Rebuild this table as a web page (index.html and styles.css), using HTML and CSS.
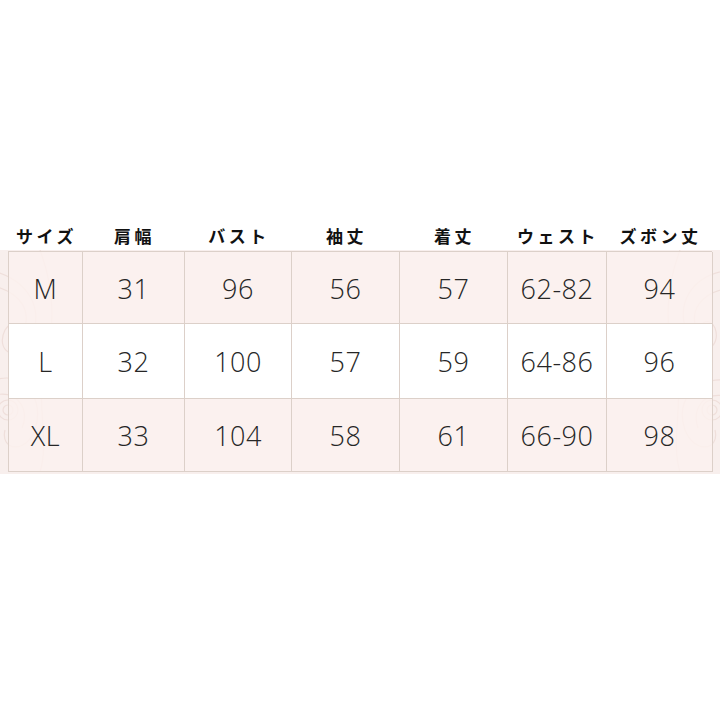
FILE: index.html
```html
<!DOCTYPE html>
<html lang="ja">
<head>
<meta charset="utf-8">
<title>サイズ表</title>
<link rel="stylesheet" href="styles.css">
</head>
<body>
<div class="sheet">
  <div class="head">
    <div class="hcell">サイズ</div>
    <div class="hcell">肩幅</div>
    <div class="hcell">バスト</div>
    <div class="hcell">袖丈</div>
    <div class="hcell">着丈</div>
    <div class="hcell">ウェスト</div>
    <div class="hcell">ズボン丈</div>
  </div>
  <div class="band">
    <svg class="paisley paisley-left" width="60" height="222" viewBox="0 0 60 222" aria-hidden="true">
      <g fill="none" stroke="#efdfdb" stroke-width="1.2">
        <path d="M-10 20 C30 30 45 60 30 90 C15 115 -5 100 5 80 C12 68 25 75 20 88"/>
        <path d="M-10 35 C22 42 33 62 22 84"/>
        <path d="M-5 130 C25 120 45 150 35 180 C25 205 0 200 5 180"/>
        <path d="M-5 145 C18 140 30 160 22 178"/>
        <circle cx="8" cy="160" r="10"/>
        <circle cx="8" cy="160" r="5"/>
        <path d="M40 0 C55 40 55 80 45 110 C35 150 50 190 40 222"/>
      </g>
    </svg>
    <svg class="paisley paisley-right" width="60" height="222" viewBox="0 0 60 222" aria-hidden="true">
      <g fill="none" stroke="#efdfdb" stroke-width="1.2">
        <path d="M70 20 C30 25 15 55 28 85 C40 110 62 98 55 78 C50 66 36 72 40 86"/>
        <path d="M70 38 C40 42 28 62 38 82"/>
        <path d="M65 130 C35 128 15 150 25 180 C35 205 60 200 55 180"/>
        <path d="M65 146 C42 142 32 160 38 178"/>
        <circle cx="52" cy="160" r="10"/>
        <circle cx="52" cy="160" r="5"/>
        <path d="M20 0 C5 40 5 80 15 110 C25 150 10 190 20 222"/>
      </g>
    </svg>
    <div class="grid">
      <div class="cell pink">M</div>
      <div class="cell pink">31</div>
      <div class="cell pink">96</div>
      <div class="cell pink">56</div>
      <div class="cell pink">57</div>
      <div class="cell pink">62-82</div>
      <div class="cell pink">94</div>

      <div class="cell white">L</div>
      <div class="cell white">32</div>
      <div class="cell white">100</div>
      <div class="cell white">57</div>
      <div class="cell white">59</div>
      <div class="cell white">64-86</div>
      <div class="cell white">96</div>

      <div class="cell pink">XL</div>
      <div class="cell pink">33</div>
      <div class="cell pink">104</div>
      <div class="cell pink">58</div>
      <div class="cell pink">61</div>
      <div class="cell pink">66-90</div>
      <div class="cell pink">98</div>
    </div>
  </div>
</div>
</body>
</html>
```
FILE: styles.css
```css
html, body {
  margin: 0;
  padding: 0;
  background: #ffffff;
}

.sheet {
  width: 720px;
  height: 720px;
  padding-top: 222px;
  box-sizing: border-box;
  font-family: "Noto Sans CJK JP", "Noto Sans", sans-serif;
  color: #222222;
}

.head {
  display: grid;
  grid-template-columns: 74px 102px 107px 108px 108px 99px 106px;
  margin: 0 8px;
  height: 28px;
}

.hcell {
  font-weight: 700;
  font-size: 17px;
  letter-spacing: 3.5px;
  line-height: 28px;
  text-align: center;
  color: #111111;
  padding-left: 3px;
}

.band {
  position: relative;
  background: #f8efed;
  padding: 1px 8px 2px;
}

.paisley {
  position: absolute;
  top: 0;
}

.paisley-left { left: 0; }
.paisley-right { right: 0; }

.grid {
  position: relative;
  display: grid;
  grid-template-columns: 74px 102px 107px 108px 108px 99px 106px;
  grid-template-rows: 72px 75px 73px;
  border-top: 1px solid #dcd0c9;
  border-left: 1px solid #dcd0c9;
}

.cell {
  display: flex;
  align-items: center;
  justify-content: center;
  border-right: 1px solid #dcd0c9;
  border-bottom: 1px solid #dcd0c9;
  font-family: "Open Sans", "Noto Sans", sans-serif;
  font-size: 27px;
  font-weight: 300;
  letter-spacing: 0.5px;
  color: #262626;
  padding-top: 1px;
}

.pink {
  background: rgba(252, 241, 239, 0.85);
}

.white {
  background: #ffffff;
}
```
